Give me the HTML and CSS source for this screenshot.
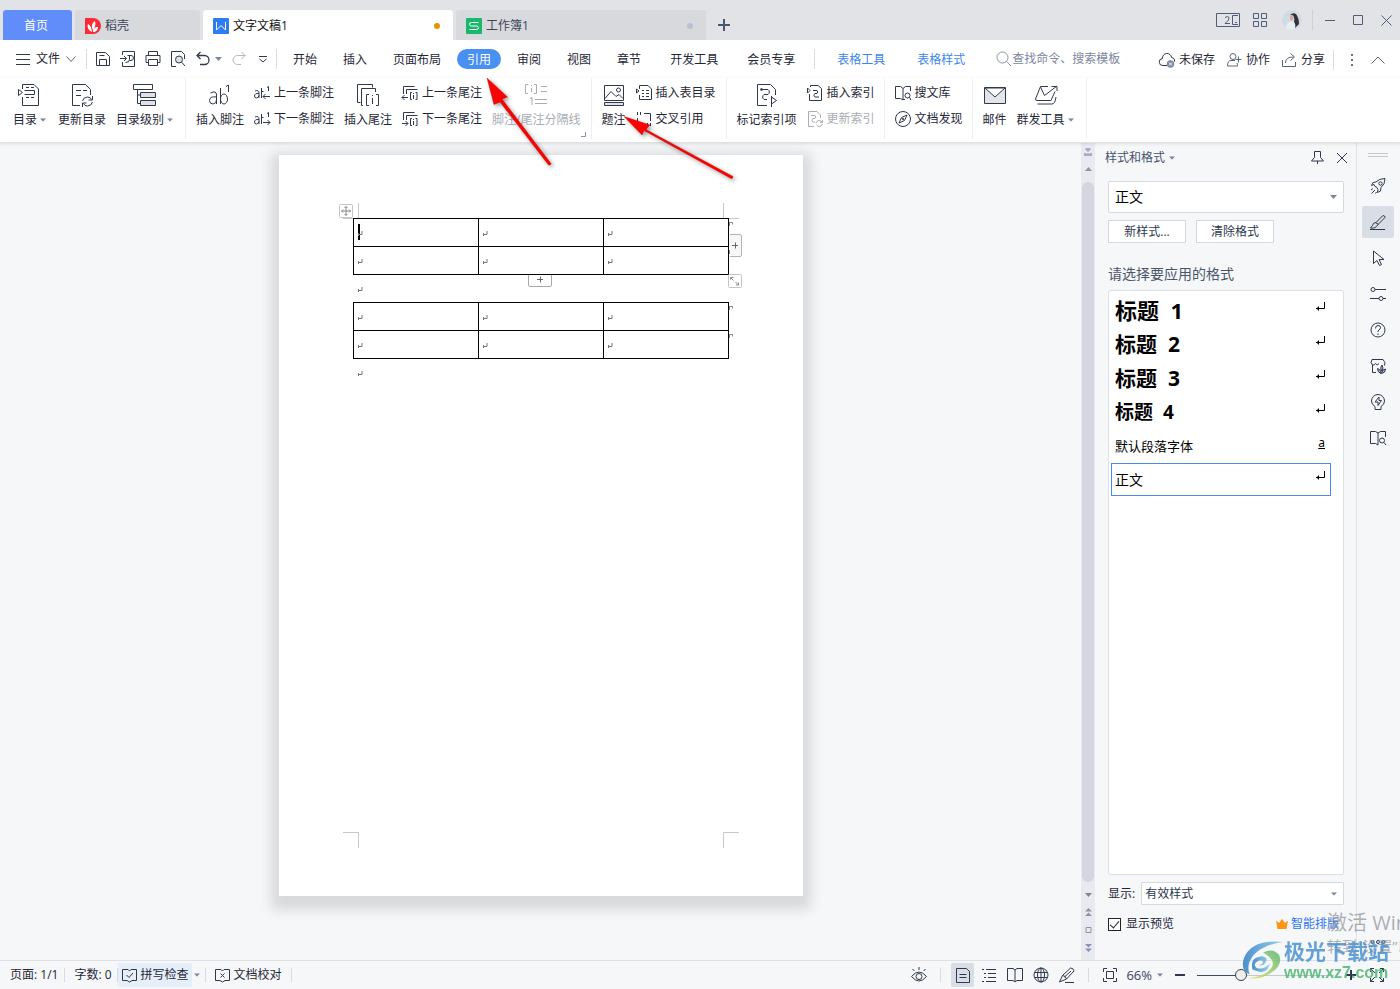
FILE: index.html
```html
<!DOCTYPE html>
<html lang="zh-CN">
<head>
<meta charset="utf-8">
<title>文字文稿1</title>
<link rel="stylesheet" href="styles.css">
</head>
<body>
<svg class="defs" aria-hidden="true">
  <symbol id="caret" viewBox="0 0 7 4"><path d="M0 0h7L3.500 4z" fill="#7c86a2" stroke="none"/></symbol>
  <symbol id="pilcrow" viewBox="0 0 6 5"><path d="M4 0v3.500H1M.5 2v3" stroke="#777"/></symbol>
  <symbol id="enter" viewBox="0 0 10 9"><path d="M9.500 0v6.500H1M3.500 4.500v4M2.500 5.500v2" stroke="#000"/></symbol>
</svg>
<div class="app">
  <header class="tabbar">
    <button class="tab tab-home">首页</button>
    <button class="tab tab-shell">
      <svg width="16" height="16"><path d="M0 0h8a8 8 0 0 1 0 16H0z" fill="#fb2a38" stroke="none"/><path d="M7 14C3 12 2 9 3 6c2 1 4 4 4 8zM8 12C6 8 7 5 10 3c1 3 0 7-2 9zM8 14c0-3 2-5 5-5 0 3-2 5-5 5z" fill="#fff" stroke="none"/></svg>
      <span>稻壳</span></button>
    <button class="tab tab-doc active">
      <svg width="16" height="16"><rect width="16" height="16" rx="1" fill="#2f7df2" stroke="none"/><path d="M3.500 4v8L8 7.500l4.500 4.500V4" stroke="#fff"/></svg>
      <span>文字文稿1</span><i class="dot dot-orange"></i></button>
    <button class="tab tab-doc">
      <svg width="16" height="16"><rect width="16" height="16" rx="1" fill="#19b96c" stroke="none"/><path d="M12.500 4.500h-7q-2 0-2 1.700t2 1.800h5q2 0 2 1.700t-2 1.800h-7" stroke="#fff"/></svg>
      <span>工作簿1</span><i class="dot"></i></button>
    <button class="add" aria-label="新建"><svg width="12" height="12"><path d="M6 0v12M0 6h12" stroke="#475673" stroke-width="2"/></svg></button>
    <div class="winctl">
      <button aria-label="窗口"><svg width="24" height="14"><path d="M.5.5h23v13H.5zM22 2.500h-5.500v9H22M19 9.500h2"/><path d="M9 4.500q3-2 4 0t-4 6h5"/></svg></button>
      <button aria-label="应用"><svg width="14" height="14"><path d="M.5.5h5v5h-5zM8.500.5h5v5h-5zM.5 8.500h5v5h-5zM8.500 8.500h5v5h-5z"/></svg></button>
      <button class="avatar" aria-label="账户"><svg width="20" height="20"><circle cx="10" cy="10" r="10" fill="#cfdce3" stroke="none"/><path d="M4 18q0-6 6-7l4 2-1 6q-5 2-9-1z" fill="#e6f0f3" stroke="none"/><path d="M8 5q3-3 6-1 3 4 3 10l-4 4q1-4-1-6 1-4-1-6z" fill="#372f3a" stroke="none"/><path d="M8 5q3-1 4 2l-2 4-2-1z" fill="#d8aca2" stroke="none"/></svg></button>
      <i class="vline"></i>
      <button aria-label="最小化"><svg width="11" height="11"><path d="M0 5.500h10"/></svg></button>
      <button aria-label="最大化"><svg width="11" height="11"><path d="M.5.500h9v9h-9z"/></svg></button>
      <button aria-label="关闭"><svg width="11" height="11"><path d="M.5.500l10 10M10.500.500l-10 10"/></svg></button>
    </div>
  </header>

  <nav class="menubar">
    <button class="file"><svg width="14" height="11"><path d="M0 .5h14M0 5.500h14M0 10.500h14"/></svg><span>文件</span><svg width="10" height="6" class="soft"><path d="M.5.500l4.500 5 4.500-5"/></svg></button>
    <i class="vline"></i>
    <div class="quick">
      <button aria-label="保存"><svg width="16" height="16"><path d="M1.500 1.500h9l4 4v9h-13zM4.500 14.500v-6h7v6M4.500 4.500h5"/></svg></button>
      <button aria-label="输出为PDF"><svg width="16" height="16"><path d="M2.500 4V.5h12v15h-12V11M0 7.500h6M4 5l2.500 2.500L4 10M7.500 4.500h3.500a2 2 0 0 1 0 5h-1.500M9.500 4.500v4q0 3-4 3"/></svg></button>
      <button aria-label="打印"><svg width="16" height="16"><path d="M3.500 4.500v-4h9v4M3.500 11.500h-2.500v-7h14v7h-2.500M3.500 8.500h9v6h-9z"/></svg></button>
      <button aria-label="打印预览"><svg width="16" height="16"><path d="M6 15.500H1.500V.5h10l3 3V8"/><circle cx="9" cy="8.500" r="3.500" fill="#dfe1e6"/><path d="M11.500 11l3.500 4"/></svg></button>
      <button aria-label="撤销"><svg width="16" height="16"><path d="M5.500 1L2 4.500 5.500 8M2 4.500h7.500a4.500 4.500 0 0 1 0 9H5" stroke-width="1.300"/></svg></button>
      <svg class="c-undo" width="7" height="4"><use href="#caret"/></svg>
      <button aria-label="恢复"><svg width="16" height="16"><path d="M10.500 1L14 4.500 10.500 8M14 4.500H6.500a4.500 4.500 0 0 0 0 9H10" stroke="#b5b8c0"/></svg></button>
      <button class="more" aria-label="自定义"><svg width="8" height="7"><path d="M0 .5h8M.5 3l3.500 3 3.500-3" /></svg></button>
    </div>
    <i class="vline"></i>
    <div class="mtabs">
      <button>开始</button><button>插入</button><button>页面布局</button><button class="on"><span>引用</span></button><button>审阅</button><button>视图</button><button>章节</button><button class="apart">开发工具</button><button class="apart">会员专享</button>
    </div>
    <i class="vline"></i>
    <div class="ctx"><button>表格工具</button><button>表格样式</button></div>
    <label class="search"><svg width="16" height="16"><circle cx="6.500" cy="6.500" r="5.500"/><path d="M10.500 10.500l4.500 4.500"/></svg><input type="text" placeholder="查找命令、搜索模板" aria-label="查找命令、搜索模板"></label>
    <div class="mright">
      <button><svg width="16" height="16"><path d="M8 13.500H4a3.500 3.500 0 0 1-.5-7 4.500 4.500 0 0 1 9-1 3.500 3.500 0 0 1 3 4"/><circle cx="11.500" cy="12" r="3.700" fill="#7d88a3" stroke="none"/><path d="M10 10.500l3 3M13 10.500l-3 3" stroke="#fff"/></svg>未保存</button>
      <button><svg width="16" height="16" class="soft"><circle cx="7" cy="4.500" r="3"/><path d="M9 8.500H5q-3.500 0-3.500 5.500h10q0-2-.5-3M12.500 4.500v6M9.500 7.500h6" /></svg>协作</button>
      <button><svg width="16" height="16" class="soft"><path d="M1.500 8v6.500h13V10M4.500 11q0-6 8-6M9.500 1.500l4 3.500-4 3.500"/></svg>分享</button>
      <i class="vline"></i>
      <button aria-label="更多" class="kebab"><svg width="4" height="13"><path d="M1 0h2v2H1zM1 5h2v2H1zM1 10h2v2H1z" fill="#6b7386" stroke="none"/></svg></button>
      <button aria-label="收起功能区" class="soft"><svg width="14" height="8"><path d="M.5 7.500L7 1l6.500 6.500"/></svg></button>
    </div>
  </nav>

  <section class="ribbon">
    <div class="group first">
      <button class="big"><svg width="24" height="24" viewBox="2 0 24 24"><path d="M5.500 6V1.500H17l4.500 4.500v16.500h-16V14"/><path d="M1.500 6.500v6l4-3zM7.500 7.500h10v4h-10M9 4.500h3M14 4.500h3M9 14.500h3M14 14.500h3"/></svg><span>目录<svg width="6" height="4" viewBox="0 0 7 4"><use href="#caret"/></svg></span></button>
      <button class="big"><svg width="24" height="24"><path d="M10 22.500H2.500v-21h13l5 5V12M6 7.500h5M13 7.500h4M6 12.500h5"/><path d="M12.500 18q1-4 5-4 3 0 4 2.500M22.500 13v4h-4M22.500 19q-1 4-5 4-3 0-4-2.500M12.500 24v-4h4"/></svg><span>更新目录</span></button>
      <button class="big"><svg width="24" height="24" viewBox="2 0 24 24"><path d="M1.500 1.500h19v5h-19zM5.500 6.500v14h3M5.500 12h3"/><path d="M8.500 9.500h15v5h-15zM8.500 17.500h15v5h-15z" fill="#dfe1e5"/></svg><span>目录级别<svg width="6" height="4" viewBox="0 0 7 4"><use href="#caret"/></svg></span></button>
    </div>
    <div class="group">
      <button class="big"><svg width="24" height="24"><path d="M2.500 10q6-3 6 2v9M8.500 14q-7-1-7 3.500 0 3.500 3.500 3.500 3.500-.5 3.500-4M12.500 5v16"/><ellipse cx="16" cy="16" rx="3.500" ry="5"/><path d="M18 3.500L20.500 2v7"/></svg><span>插入脚注</span></button>
      <div class="stack">
        <button><svg width="16" height="16"><path d="M1 6q4-1.500 4 2v5M5 8.500Q.5 8 .5 11q0 2 2 2T5 10.500M7.500 3v10M7.500 6.500h2M13 2.500l1.500-1V6M16 11.500H9M11.500 9L9 11.500l2.500 2.500"/></svg>上一条脚注</button>
        <button><svg width="16" height="16"><path d="M1 6q4-1.500 4 2v5M5 8.500Q.5 8 .5 11q0 2 2 2T5 10.500M7.500 3v10M7.500 6.500h2M13 2.500l1.500-1V6M9 11.500h7M13.500 9l2.500 2.500-2.500 2.500"/></svg>下一条脚注</button>
      </div>
      <button class="big"><svg width="24" height="24"><path d="M4.500 19.500h-3v-18h15v3M7 22.500H5.500v-17h14V9M13 11.500h-2.500v11H13M20 11.500h2.500v11H20M16.500 15v6M16.500 12v1"/></svg><span>插入尾注</span></button>
      <div class="stack">
        <button><svg width="16" height="16"><path d="M1.500 9V1.500h11M4.500 9V4.500h11M10 7.500H8.500v7H10M13.500 7.500H15v7h-1.500M11.500 10v4M11.500 8v1M0 12.500h6M2.500 10L0 12.500 2.500 15"/></svg>上一条尾注</button>
        <button><svg width="16" height="16"><path d="M1.500 9V1.500h11M4.500 9V4.500h11M10 7.500H8.500v7H10M13.500 7.500H15v7h-1.500M11.500 10v4M11.500 8v1M0 12.500h6M3.500 10L6 12.500 3.500 15"/></svg>下一条尾注</button>
      </div>
      <button class="big off" disabled><svg width="24" height="24"><path d="M4 1.500H1.500v9H4M10 1.500h2.500v9H10M7.500 5v4M7.500 2v1M17 3.500h6M17 8.500h6M6 15.500l2-1V22M11 16.500h12M11 20.500h12"/></svg><span>脚注/尾注分隔线</span></button>
      <svg class="launcher" width="5" height="5"><path d="M4.500 0v4.500H0" stroke="#8a93a8"/></svg>
    </div>
    <div class="group">
      <button class="big"><svg width="24" height="24"><path d="M2.500 2.500h19v15h-19zM3 15.500l6-7 5 5 3-2 4 4"/><circle cx="16.500" cy="7" r="2"/><path d="M2.500 19.500h19v3h-19z" fill="#dfe1e5"/></svg><span>题注</span></button>
      <div class="stack">
        <button><svg width="16" height="16"><path d="M3.500 4V.5H12l3.500 3.500v10.500h-12V10M.5 4v4L3 6zM6 5.500h2M10 5.500h3M6 8.500h2M10 8.500h3M6 11.500h2M10 11.500h3"/></svg>插入表目录</button>
        <button><svg width="16" height="16"><path d="M1.500 1v3M4.500 1v3M8 2.500h6.500V10M11.500 12v3M14.500 12v3M1.500 7v6.500H8"/></svg>交叉引用</button>
      </div>
    </div>
    <div class="group tight">
      <button class="big"><svg width="24" height="24"><path d="M12 22.500H2.500v-21h13l5 5V12M6 6.500h7a3 3 0 0 1 0 5H9a3 3 0 0 0 0 5h3"/><circle cx="6.500" cy="6.500" r="1"/><path d="M16.500 13v11M16.500 14l5 3.500-5 3.500"/></svg><span>标记索引项</span></button>
      <div class="stack">
        <button><svg width="16" height="16"><path d="M3.500 2V.5H11l3.500 3v12h-12V9M.5 3v5L3 5.500zM6 5.500h4a2 2 0 0 1 0 3H8a2 2 0 0 0 0 3.500h4"/></svg>插入索引</button>
        <button class="off" disabled><svg width="16" height="16"><path d="M7 15.500H1.500V.5H10l3.500 3.500v3M4 4.500h4a2 2 0 0 1 0 3H6a2 2 0 0 0 0 3.500h2M9 12q1-2.500 3-2.500t3 1.500M15.500 9v2.500H13M15.500 13q-1 2.500-3 2.500t-3-1.500"/></svg>更新索引</button>
      </div>
    </div>
    <div class="group tight">
      <div class="stack">
        <button><svg width="16" height="16"><path d="M8 3.500L5.500 1.500h-5v12h5L8 15M8 3.500l2.500-2h5V6M8 3.500V15M8 14.500h2"/><circle cx="12.500" cy="10.500" r="2.500"/><path d="M14.500 12.500L16 15"/></svg>搜文库</button>
        <button><svg width="16" height="16"><circle cx="8" cy="8" r="7.500"/><path d="M12 4L9.500 9.500 4 12l2.500-5.500z"/><circle cx="8" cy="8" r=".8"/></svg>文档发现</button>
      </div>
    </div>
    <div class="group">
      <button class="big"><svg width="24" height="24"><path d="M1.500 4.500h21v16h-21z" fill="#e4e5e8"/><path d="M2 5l10 9L22 5z" fill="#fff"/></svg><span>邮件</span></button>
      <button class="big"><svg width="24" height="24" viewBox="0 0 24 24"><path d="M14 3.500H6.500L1.500 16q0 1.500 1.500 1.500h14l4-9M6.500 4l4 8.500L23 3M17.500 3.500H23V8M3.500 21H18q3 0 4-7"/></svg><span>群发工具<svg width="6" height="4" viewBox="0 0 7 4"><use href="#caret"/></svg></span></button>
    </div>
    <i class="rule"></i>
  </section>

  <main class="work">
    <section class="canvas">
      <article class="page">
        <table class="grid">
          <tr><td class="cur"><svg width="6" height="5"><use href="#pilcrow"/></svg></td><td><svg width="6" height="5"><use href="#pilcrow"/></svg></td><td><svg width="6" height="5"><use href="#pilcrow"/></svg></td></tr>
          <tr><td><svg width="6" height="5"><use href="#pilcrow"/></svg></td><td><svg width="6" height="5"><use href="#pilcrow"/></svg></td><td><svg width="6" height="5"><use href="#pilcrow"/></svg></td></tr>
        </table>
        <p><svg width="6" height="5"><use href="#pilcrow"/></svg></p>
        <table class="grid">
          <tr><td><svg width="6" height="5"><use href="#pilcrow"/></svg></td><td><svg width="6" height="5"><use href="#pilcrow"/></svg></td><td><svg width="6" height="5"><use href="#pilcrow"/></svg></td></tr>
          <tr><td><svg width="6" height="5"><use href="#pilcrow"/></svg></td><td><svg width="6" height="5"><use href="#pilcrow"/></svg></td><td><svg width="6" height="5"><use href="#pilcrow"/></svg></td></tr>
        </table>
        <p><svg width="6" height="5"><use href="#pilcrow"/></svg></p>
        <svg class="marks" viewBox="0 0 524 741" width="524" height="741">
          <path d="M79.500 48v15M64 63.500h10M444.500 48v15M450 63.500h10M64 677.500h15.500v15.500M460 677.500h-15.500v15.500" stroke="#c8c8c8"/>
          <path d="M450.500 71v-4M451 67.500h2.500v2M450.500 99v-4M450.500 155v-4M451 151.500h2.500v2M450.500 183v-4M451 179.500h2.500v2" stroke="#888"/>
          <rect x="60.500" y="49.500" width="13" height="13" rx="1" fill="#fff" stroke="#c4c4c4"/>
          <path d="M67 51.500v9M62.500 56h9M65.500 53l1.500-1.500 1.500 1.500M65.500 59l1.500 1.500 1.500-1.500M64 54.500L62.500 56l1.500 1.500M70 54.500l1.500 1.500-1.500 1.500" stroke="#888"/>
          <path d="M451 79.500h10q1.500 0 1.500 1.500v19q0 1.500-1.500 1.500h-10" fill="#f7f7f7" stroke="#b4b4b4"/>
          <path d="M453 90.500h6M456.500 87.500v6M258 124.500h6M261.500 121.500v6" stroke="#666"/>
          <path d="M249.500 120v10q0 1.500 1.500 1.500h20q1.500 0 1.500-1.500v-10" stroke="#a8a8a8"/>
          <rect x="449.500" y="119.500" width="13" height="13" rx="1" fill="#fff" stroke="#c4c4c4"/>
          <path d="M451.500 124.500v-2h3M452 123l2.500 2.500M459.500 127.500v2.500h-2.500M459 129.500l-2.500-2.500" stroke="#888"/>
        </svg>
      </article>
    </section>
    <div class="scroll">
      <svg width="8" height="8"><path d="M1.500 0h5v2L4 4 1.500 2zM0 5h2v1h1V5h2v1h1V5h2v3H0z" fill="#a8afc4" stroke="none"/></svg>
      <svg width="7" height="4"><path d="M0 4h7L3.500 0z" fill="#8a94b0" stroke="none"/></svg>
      <i class="thumb"></i>
      <svg width="7" height="4"><use href="#caret"/></svg>
      <svg width="7" height="8"><path d="M0 3.500h7L3.500 0zM0 8h7L3.500 4.500z" fill="#8a94b0" stroke="none"/></svg>
      <svg width="7" height="6"><path d="M1 .5h5v5H1z" stroke="#8a94b0"/></svg>
      <svg width="7" height="8"><path d="M0 0h7L3.500 3.500zM0 4.500h7L3.500 8z" fill="#8a94b0" stroke="none"/></svg>
    </div>

    <aside class="panel">
      <div class="phead"><button>样式和格式<svg width="6" height="4" viewBox="0 0 7 4"><use href="#caret"/></svg></button>
        <span class="push"></span>
        <button aria-label="固定"><svg width="13" height="13"><path d="M3.500.5h6v6l3 3.500H.5l3-3.500zM6.500 10v3"/></svg></button>
        <button aria-label="关闭窗格"><svg width="12" height="12"><path d="M1 1l10 10M11 1L1 11"/></svg></button></div>
      <div class="field tall"><select aria-label="当前样式"><option>正文</option></select><svg width="7" height="4"><use href="#caret"/></svg></div>
      <div class="acts"><button>新样式...</button><button>清除格式</button></div>
      <h2>请选择要应用的格式</h2>
      <ul class="styles">
        <li class="h1">标题  1<svg width="10" height="9"><use href="#enter"/></svg></li>
        <li class="h2">标题  2<svg width="10" height="9"><use href="#enter"/></svg></li>
        <li class="h3">标题  3<svg width="10" height="9"><use href="#enter"/></svg></li>
        <li class="h4">标题  4<svg width="10" height="9"><use href="#enter"/></svg></li>
        <li class="char">默认段落字体<u>a</u></li>
        <li class="sel">正文<svg width="10" height="9"><use href="#enter"/></svg></li>
      </ul>
      <div class="show"><label for="show">显示:</label><div class="field"><select id="show"><option>有效样式</option></select><svg width="6" height="4" viewBox="0 0 7 4"><use href="#caret"/></svg></div></div>
      <div class="prev"><label><input type="checkbox" checked>显示预览</label><a href="#"><svg width="12" height="10"><path d="M0 1.500l3 2.500L6 0l3 4 3-2.500L10.500 10h-9z" fill="#ff9412" stroke="none"/></svg>智能排版</a></div>
    </aside>

    <nav class="side">
      <svg class="grip" width="20" height="5"><path d="M0 .5h20M0 3.500h20" stroke="#c3c7cf"/></svg>
      <button aria-label="推荐"><svg width="16" height="16"><path d="M4 6.500L1.500 7.500l1.500-3L6 4Q9 .5 15 .5q0 6-4 9l-.5 3.500-3 1.500.5-3-1-2-2-1zM3 10.500l-2 1.500M5 12l-3.500 3.500M6.500 14l-1 1.500"/><circle cx="10.500" cy="5.500" r="1.700"/></svg></button>
      <button class="on" aria-label="样式"><svg width="16" height="16"><path d="M6 8.500l7-7q2 0 2 2l-7 7zM6 8.500q-3 0-3.500 3L.5 14q5 1 7.500-3.500zM0 15.500h15" /></svg></button>
      <button aria-label="选择"><svg width="16" height="16"><path d="M3.500 1v12.500l3.500-3 2.500 5 2-1-2.500-5H14z"/></svg></button>
      <button aria-label="属性"><svg width="16" height="16"><circle cx="3" cy="3.500" r="2"/><circle cx="11" cy="12.500" r="2"/><path d="M5 3.500h11M0 12.500h9M13 12.500h3"/></svg></button>
      <button aria-label="帮助"><svg width="16" height="16"><circle cx="8" cy="8" r="7"/><path d="M5.500 6.500q0-3 2.500-3t2.500 2q0 1.500-1.500 2.500T8 10M8 11.500v1.500"/></svg></button>
      <button aria-label="稻壳资源"><svg width="16" height="16"><path d="M6 14.500H2.500V7Q0 5 2 1.500h11q3 3 1.500 6M2.500 7q2 .5 3-1.500 1.500 3 3.500 0"/><path d="M11 15.500Q7.500 14.500 7.500 10.500q2.500.5 3.500 3.500zM11 12.500q-1-3 1-5.500 1.500 2.500.5 5.500zM11.500 15.500q0-4 4-4.500 0 4-4 4.500z" fill="#aeb4c0"/></svg></button>
      <button aria-label="灵感"><svg width="16" height="16"><path d="M5 12.500Q1.500 10.500 1.500 7a6.500 6.500 0 0 1 13 0q0 3.500-3.500 5.500v3H5zM9 3L5 8h3v3.500l3.500-5H9z"/></svg></button>
      <button aria-label="查阅"><svg width="16" height="16"><path d="M8 3L5.500 1.500h-5v12h5L8 15M8 3l2.500-1.500h5V7M8 3v12"/><circle cx="12" cy="10.500" r="2.500"/><path d="M14 12.500l2 2.500"/></svg></button>
      <button class="last" aria-label="更多"><svg width="16" height="6"><circle cx="2.500" cy="3" r="1.500"/><circle cx="8" cy="3" r="1.500"/><circle cx="13.500" cy="3" r="1.500"/></svg></button>
    </nav>
  </main>

  <footer class="status">
    <span class="cell">页面: 1/1</span><span class="cell words">字数: 0</span>
    <button class="spell"><svg width="15" height="14"><path d="M6 1.500H.5v11H5l2.500 1.500 2.500-1.500h4.500v-11H9L7.500 3zM4.500 7l2.500 2.500 4-4.500"/></svg>拼写检查</button>
    <svg class="c-spell" width="6" height="4" viewBox="0 0 7 4"><use href="#caret"/></svg>
    <button class="cell proof"><svg width="15" height="14"><path d="M6 1.500H.5v11H5l2.500 1.500 2.500-1.500h4.500v-11H9L7.500 3zM5.500 5.500l4 4M9.500 5.500l-4 4"/></svg>文档校对</button>
    <div class="views">
      <button aria-label="护眼模式"><svg width="16" height="16"><path d="M.5 9.500q7.500-9 15 0-7.500 9-15 0zM8 0v3M1.500 2l2 2M14.500 2l-2 2"/><circle cx="8" cy="9.500" r="3"/></svg></button>
      <i class="vline"></i>
      <button class="on" aria-label="页面视图"><svg width="16" height="16"><path d="M1.500 1.500h10l3 3v11h-13zM4.500 7.500h7M4.500 10.500h7"/></svg></button>
      <button aria-label="大纲"><svg width="16" height="16"><path d="M1 2.500h2M5 2.500h10M3 6.500h2M7 6.500h8M3 10.500h2M7 10.500h8M1 14.500h2M5 14.500h10"/></svg></button>
      <button aria-label="阅读版式"><svg width="16" height="16"><path d="M8 3L6 1.500H.5v12H6L8 15l2-1.500h5.500v-12H10zM8 3v11"/></svg></button>
      <button aria-label="Web版式"><svg width="16" height="16"><circle cx="8" cy="8" r="7"/><ellipse cx="8" cy="8" rx="3.500" ry="7"/><path d="M1.500 5.500h13M1.500 10.500h13M8 1v14"/></svg></button>
      <button aria-label="写作模式"><svg width="16" height="16"><path d="M.5 15l3-6.500 8-7.500q3 0 3.500 3L7.500 12zM3.500 8.500q3 0 4 3.500M6 15.500h9M5.500 10L12 4"/></svg></button>
      <i class="vline"></i>
      <button aria-label="适合页面"><svg width="16" height="16"><path d="M1.500 5V1.500H5M11 1.500h3.500V5M14.500 11v3.500H11M5 14.500H1.500V11M4.500 4.500h7v7h-7z"/></svg></button>
      <button class="pct">66%<svg width="6" height="4" viewBox="0 0 7 4"><use href="#caret"/></svg></button>
      <button aria-label="缩小"><svg width="10" height="10"><path d="M0 5h10" stroke-width="2"/></svg></button>
      <input type="range" min="0" max="100" value="30" aria-label="缩放">
      <button aria-label="放大"><svg width="10" height="10"><path d="M0 5h10M5 0v10" stroke-width="2"/></svg></button>
      <button class="full" aria-label="全屏"><svg width="16" height="16"><path d="M1.500 5V1.500H5M11 1.500h3.500V5M14.500 11v3.500H11M5 14.500H1.500V11M1.500 1.500L6 6M14.500 1.500L10 6M14.500 14.500L10 10M1.500 14.500L6 10"/></svg></button>
    </div>
  </footer>

  <svg class="pointers" width="260" height="120" viewBox="480 70 260 120">
    <g fill="#ff0000" stroke="#b01010" stroke-width=".4">
      <path d="M487 78l20.500 19-5.500 2 49 64.500q0 2-2.500 1.500L500 102l-6 2.500z"/>
      <path d="M624 116.500l26 8.500-4 4.500 87 47q0 2.500-2 2L644 130.500l-2 4.500z"/>
    </g>
  </svg>
  <div class="winmark"><b>激活 Windows</b><span>转到“设置”以激活 Windows。</span></div>
  <div class="sitemark">
    <svg width="42" height="42" viewBox="0 0 44 42">
      <defs><linearGradient id="g1" x1="0" y1="0" x2="1" y2="0"><stop offset="0" stop-color="#2f7fc4"/><stop offset="1" stop-color="#8ccbe8"/></linearGradient><linearGradient id="g2" x1="0" y1="1" x2="1" y2="0"><stop offset="0" stop-color="#e8df62"/><stop offset="1" stop-color="#57b774"/></linearGradient></defs>
      <path d="M43 1Q10-2 2 18q-4 13 6 17-4-10 4-20Q22 4 43 1z" fill="url(#g1)" stroke="none"/>
      <path d="M22 12q11-5 17 3 4 10-8 18-11 8-25 6 19-2 25-11 5-8-9-16z" fill="url(#g2)" stroke="none"/>
      <path d="M11 30q-3-13 10-14 7 1 4 6-3 5-8 3 5 0 5-3-1-3-5-1-6 3-2 7 7 3 14-4-2 13-18 6z" fill="url(#g1)" stroke="none"/>
    </svg>
    <div><b>极光下载站</b><span>www.xz7.com</span></div>
  </div>
</div>
</body>
</html>
```

FILE: styles.css
```css
* { box-sizing: border-box; }
body { margin: 0; }
body, button, input, select {
  font: 12px/16px "Open Sans", "Noto Sans CJK SC", sans-serif;
  color: #1f2737;
}
button { border: 0; background: none; padding: 0; white-space: nowrap; display: flex; align-items: center; }
svg { fill: none; stroke: #2f384c; flex: none; display: block; overflow: visible; }
.defs { position: absolute; width: 0; height: 0; }
.soft, .soft svg { stroke: #5d6679; }
.vline { width: 1px; height: 20px; background: #d9dbe0; flex: none; }
.app { position: relative; display: flex; flex-direction: column; height: 100vh; overflow: hidden; background: #f6f7f9; }

/* window tabs */
.tabbar { display: flex; align-items: flex-end; gap: 3px; height: 40px; padding-left: 3px; background: #e2e3e7; flex: none; }
.tab { height: 30px; border-radius: 3px 3px 0 0; background: #d8d9dd; padding: 2px 13px 0 10px; gap: 4px; color: #3c465a; }
.tab-home { width: 69px; justify-content: center; background: #618dfa; color: #fff; }
.tab-shell { width: 125px; }
.tab-doc { width: 250px; }
.tab.active { background: #fff; color: #111; }
.dot { width: 6px; height: 6px; border-radius: 3px; background: #b9c1d4; margin-left: auto; }
.dot-orange { background: #e59500; }
.add { height: 30px; padding: 0 9px; }
.winctl { margin-left: auto; height: 40px; display: flex; align-items: center; gap: 17px; padding-right: 8px; }
.winctl svg { stroke: #4f5d7a; }
.winctl button:first-child { margin-right: -4px; }
.winctl .avatar { margin: 0 -7px 0 -2px; }
.winctl .vline { margin-right: -5px; background: #cfd1d7; }

/* menu row */
.menubar { display: flex; align-items: center; height: 38px; padding: 0 15px 0 16px; background: #fff; flex: none; }
.file { gap: 6px; margin-right: 10px; }
.quick { display: flex; align-items: center; gap: 9px; padding: 0 9px 0 8px; }
.c-undo { margin-left: -5px; }
.more { margin-left: 3px; }
.mtabs { display: flex; padding: 0 6px 0 3px; }
.mtabs button { padding: 2px 13px 0; }
.mtabs .apart { margin-left: 3px; }
.mtabs .on { padding: 0 3px; }
.on > span { background: #4a90f2; color: #fff; border-radius: 10px; padding: 3px 10px 1px; }
.ctx { display: flex; gap: 32px; padding: 2px 31px 0 22px; }
.ctx button { color: #3c86ee; }
.search { display: flex; align-items: center; flex: 1 1 124px; min-width: 0; }
.search svg { stroke: #8993aa; }
.search input { border: 0; background: none; padding: 0; width: 120px; min-width: 0; outline: 0; }
.search input::placeholder { color: #7c86a0; opacity: 1; }
.mright { display: flex; align-items: center; gap: 11px; padding-top: 2px; }
.mright button { gap: 4px; }
.mright .vline { margin: 0 5px 0 -3px; }
.mright .kebab { margin-right: 6px; }

/* ribbon */
.ribbon { display: flex; height: 65px; background: #fff; border-bottom: 1px solid #dfe1e5; box-shadow: 0 1px 3px #0000001a; flex: none; z-index: 1; }
.group { position: relative; display: flex; gap: 10px; padding: 0 10px; height: 61px; border-left: 1px solid #eceef1; align-items: flex-start; }
.group.first { border: 0; padding-left: 13px; }
.group.tight { padding: 0 9px 0 10px; }
.rule { width: 1px; height: 61px; background: #eceef1; }
.big { flex-direction: column; gap: 5px; padding-top: 5px; }
.big span { display: flex; align-items: center; }
.big span svg { margin: 0 2px 0 3px; }
.stack { padding-top: 2px; }
.stack button { height: 26px; gap: 4px; }
.off { color: #a9adb5; }
.off svg { stroke: #a9adb5; }
.launcher { position: absolute; right: 5px; bottom: 2px; }

/* workspace */
.work { flex: 1; display: flex; min-height: 0; }
.canvas { flex: 1; padding-top: 12px; display: flex; justify-content: center; align-items: flex-start; overflow: hidden; }
.page { position: relative; width: 524px; height: 741px; flex: none; background: #fff; padding: 63px 74px 0; box-shadow: 0 6px 12px 8px #0000001f; }
.grid { border-collapse: collapse; width: 376px; table-layout: fixed; }
.grid td { border: 1px solid #000; height: 28px; padding: 2px 0 0 4px; }
.grid .cur { background: linear-gradient(#000, #000) 4px 5px / 2px 16px no-repeat; }
.page p { margin: 0; height: 27px; padding: 12px 0 0 5px; }
.marks { position: absolute; left: 0; top: 0; }
.scroll { width: 14px; background: #e9eaf0; display: flex; flex-direction: column; align-items: center; gap: 11px; padding: 5px 0 8px; flex: none; }
.thumb { flex: 1; width: 12px; border-radius: 6px; background: #d4d6df; }

/* styles pane */
.panel { width: 262px; flex: none; display: flex; flex-direction: column; padding: 6px 12px 28px 13px; border-right: 1px solid #dfe1e6; }
.phead { display: flex; align-items: center; gap: 12px; height: 17px; margin: 0 -4px 15px -3px; }
.phead button { color: #46526c; gap: 4px; }
.push { flex: 1; }
.field { position: relative; flex: 1; display: flex; }
.field.tall { flex: none; }
.field select { appearance: none; width: 100%; height: 23px; padding: 0 3px; border: 1px solid #d5d8df; border-radius: 1px; background: #fff; color: #2c374d; outline: 0; }
.field.tall select { height: 32px; padding: 0 6px; font-size: 14px; color: #000; border-radius: 2px; }
.field svg { position: absolute; right: 7px; top: calc(50% - 2px); }
.acts { display: flex; gap: 10px; margin-top: 7px; }
.acts button { width: 78px; height: 23px; border: 1px solid #d5d8df; background: #fff; justify-content: center; color: #2c374d; }
.panel h2 { font-size: 14px; line-height: 20px; font-weight: 400; color: #4b566c; margin: 21px 0 6px; }
.styles { flex: 1; list-style: none; margin: 0; padding: 2px 12px 2px 2px; background: #fff; border: 1px solid #dde0e5; border-radius: 2px; color: #000; font-family: "Noto Sans", "Noto Sans CJK SC", sans-serif; }
.styles li { display: flex; justify-content: space-between; align-items: center; height: 34px; padding: 0 6px 0 4px; white-space: pre; font-weight: 700; }
.styles svg { margin-bottom: 8px; }
.styles .h1 { font-size: 22px; }
.styles .h2 { font-size: 21px; }
.styles .h3 { font-size: 21px; }
.styles .h4 { font-size: 19px; }
.styles .char { font-size: 13px; font-weight: 400; }
.char u { font-size: 12px; margin-bottom: 6px; }
.styles .sel { height: 33px; border: 1px solid #4a8be8; font-size: 14px; font-weight: 400; padding: 0 5px 0 3px; }
.show { display: flex; align-items: center; gap: 6px; margin-top: 7px; }
.prev { display: flex; justify-content: space-between; margin-top: 11px; padding-right: 5px; }
.prev label, .prev a { display: flex; align-items: center; gap: 5px; }
.prev a { color: #2f73f0; text-decoration: none; gap: 3px; }
.prev input { appearance: none; width: 13px; height: 13px; margin: 0; border: 1px solid #222; background: #fff; display: grid; place-items: center; }
.prev input::after { content: ""; width: 4px; height: 8px; border: solid #222; border-width: 0 1px 1px 0; rotate: 40deg; margin-bottom: 2px; }

.side { width: 43px; flex: none; display: flex; flex-direction: column; align-items: center; gap: 4px; padding: 10px 2px 8px 0; }
.grip { margin-bottom: 8px; }
.side button { width: 32px; height: 32px; justify-content: center; border-radius: 2px; }
.side .on { background: #d9dee6; }
.side .last { margin-top: auto; height: 20px; }

/* status bar */
.status { display: flex; align-items: center; height: 29px; border-top: 1px solid #dfe1e6; padding: 0 15px 0 10px; flex: none; }
.cell { display: flex; align-items: center; height: 14px; padding-right: 6px; border-right: 1px solid #d9dbe0; }
.words { padding: 0 5px 0 9px; }
.spell { height: 24px; padding: 0 3px 0 4px; gap: 4px; background: #e6eefa; }
.c-spell { margin: 0 5px 0 2px; }
.proof { gap: 4px; padding: 0 9px; border-left: 1px solid #d9dbe0; }
.views { margin-left: auto; display: flex; align-items: center; gap: 10px; }
.views .vline { height: 14px; margin: 0 3px; }
.views .on { width: 23px; height: 24px; justify-content: center; background: #d9dee6; border-radius: 2px; margin: 0 -3px; }
.pct { gap: 5px; font-size: 13px; color: #3a4560; }
.views .pct { margin: 0 2px 0 -2px; }
.views input { appearance: none; width: 137px; height: 12px; margin: 0 2px; background: linear-gradient(#3f4c69, #3f4c69) 0 50% / 30% 1px no-repeat, linear-gradient(#c4c9d2, #c4c9d2) 0 50% / 100% 1px no-repeat; }
.views input::-webkit-slider-thumb { appearance: none; width: 12px; height: 12px; border: 1px solid #444; border-radius: 50%; background: #eee; }
.views .full { margin-left: 3px; }

/* layers above the window */
.pointers { position: absolute; left: 480px; top: 70px; z-index: 3; pointer-events: none; filter: drop-shadow(2px 2px 2px #0006); }
.winmark { position: absolute; left: calc(100% - 73px); bottom: 32px; white-space: nowrap; z-index: 2; color: #8e9197b8; pointer-events: none; }
.winmark b, .winmark span { display: block; font-weight: 400; font-size: 20px; line-height: 24px; }
.winmark span { font-size: 15px; line-height: 22px; }
.sitemark { position: absolute; right: 11px; bottom: 6px; display: flex; align-items: center; z-index: 2; opacity: .85; pointer-events: none; }
.sitemark b { display: block; font-size: 21px; line-height: 24px; color: #4b93d4; }
.sitemark span { display: block; font: 700 16px/20px "Liberation Sans", sans-serif; color: #4fb873; }
```
